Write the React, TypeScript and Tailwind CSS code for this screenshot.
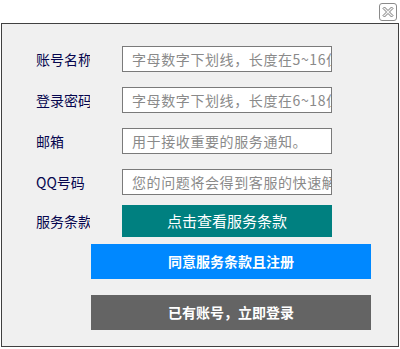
import React from 'react';

const font = { fontFamily: '"Noto Sans CJK SC", "Noto Sans", sans-serif' };

const fields = [
  { label: '账号名称', hint: '字母数字下划线，长度在5~16位' },
  { label: '登录密码', hint: '字母数字下划线，长度在6~18位' },
  { label: '邮箱', hint: '用于接收重要的服务通知。' },
  { label: 'QQ号码', hint: '您的问题将会得到客服的快速解答' },
];

const CloseBox = () => (
  <div className="w-[18px] h-[18px] rounded-[3px] border border-[#8a8a8a] bg-white flex items-center justify-center">
    <svg width="12" height="12" viewBox="0 0 12 12">
      <path
        d="M1 2.5 L2.5 1 L6 4.5 L9.5 1 L11 2.5 L7.5 6 L11 9.5 L9.5 11 L6 7.5 L2.5 11 L1 9.5 L4.5 6 Z"
        fill="#f4f4f4"
        stroke="#7a7a7a"
        strokeWidth="1"
        strokeLinejoin="round"
      />
    </svg>
  </div>
);

const Label = ({ text }: { text: string }) => (
  <div className="w-[86px] shrink-0">
    <div className="w-[54px] overflow-hidden whitespace-nowrap text-[14px] leading-[20px] text-[#06064e]">
      {text}
    </div>
  </div>
);

export default function App() {
  return (
    <div className="w-[400px] h-[349px] bg-white overflow-hidden" style={font}>
      <div className="h-[23px] flex justify-end pt-[3px] pr-[3px]">
        <CloseBox />
      </div>
      <div className="ml-[1px] w-[398px] h-[324px] border border-[#404040] bg-[#f0f0f0] pt-[22px] pl-[34px]">
        <div className="flex flex-col gap-[15px]">
          {fields.map((f) => (
            <div key={f.label} className="flex items-center">
              <Label text={f.label} />
              <input
                readOnly
                placeholder={f.hint}
                className="w-[210px] h-[26px] border border-[#7a7a7a] bg-white pl-[9px] text-[14px] tracking-[0.6px] outline-none placeholder:text-[#8a8a8a]"
                style={font}
              />
            </div>
          ))}
        </div>
        <div className="flex items-center mt-[10px]">
          <Label text="服务条款" />
          <button className="w-[210px] h-[32px] bg-[#008080] text-white text-[15px]">
            点击查看服务条款
          </button>
        </div>
        <button className="ml-[55px] mt-[7px] w-[280px] h-[35px] bg-[#0088ff] text-white text-[14px] font-bold block">
          同意服务条款且注册
        </button>
        <button className="ml-[55px] mt-[16px] w-[280px] h-[35px] bg-[#646464] text-white text-[14px] font-bold block">
          已有账号，立即登录
        </button>
      </div>
    </div>
  );
}
